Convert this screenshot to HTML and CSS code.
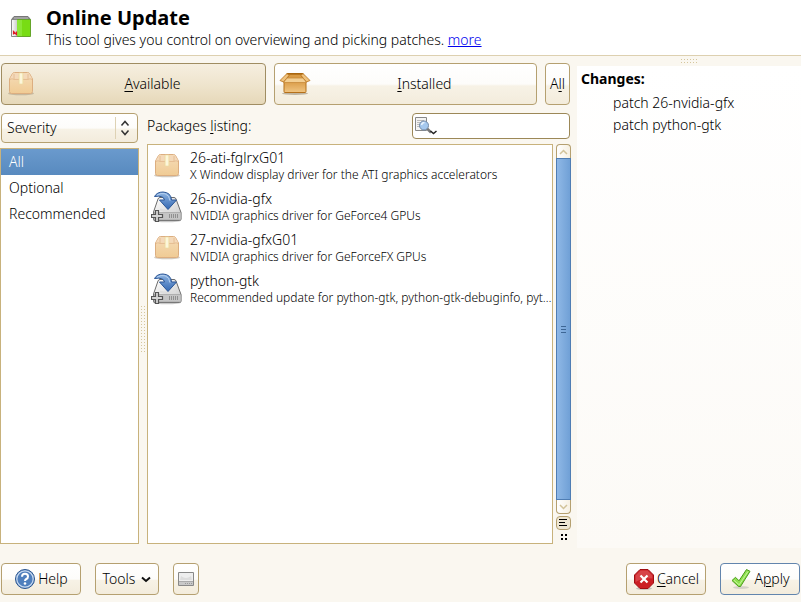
FILE: index.html
```html
<!DOCTYPE html>
<html lang="en">
<head>
<meta charset="utf-8">
<meta name="viewport" content="width=device-width, initial-scale=1">
<title>Online Update</title>
<link rel="stylesheet" href="styles.css">
</head>
<body>
<svg class="defs" aria-hidden="true">
  <defs>
    <linearGradient id="box-fill" x1="0" y1="0" x2="0" y2="1"><stop offset="0" stop-color="#f5dcb8"/><stop offset="1" stop-color="#f0cb94"/></linearGradient>
    <linearGradient id="arrow-fill" x1="0" y1="0" x2="0" y2="1"><stop offset="0" stop-color="#8fb5e2"/><stop offset="1" stop-color="#3468b2"/></linearGradient>
    <linearGradient id="disk-fill" x1="0" y1="0" x2="1" y2="1"><stop offset="0" stop-color="#ffffff"/><stop offset="1" stop-color="#c9c9c9"/></linearGradient>
    <linearGradient id="open-fill" x1="0" y1="0" x2="0" y2="1"><stop offset="0" stop-color="#d99a45"/><stop offset="1" stop-color="#f0c582"/></linearGradient>
    <linearGradient id="side-fill" x1="0" y1="0" x2="1" y2="0"><stop offset="0" stop-color="#ffffff"/><stop offset="1" stop-color="#c4c4c4"/></linearGradient>
    <symbol id="box" viewBox="0 0 28 28">
      <ellipse cx="14" cy="23.500" rx="13" ry="1.800" fill="#9a8a70" opacity=".45"/>
      <path d="M2.500 9 5.500 3.500q.6-1 2-1h13q1.400 0 2 1L25.500 9v12.500q0 2-2 2h-19q-2 0-2-2z" fill="url(#box-fill)" stroke="#dcae80"/>
      <path d="M3 8.500 6 3.500h16l3 5z" fill="#f4d9ba"/>
      <path d="M3 9.500Q5 8 7 9.500M21 9.500q2-1.500 4 0M7 9.500h14M7 4 7 9M21 4v5" fill="none" stroke="#e2b88e" stroke-width=".8"/>
      <path d="M12 3h4v11h-4z" fill="#f9efc5" stroke="#ead9a2" stroke-width=".6"/>
      <path d="M14 3.500v10" stroke="#fffdf0" stroke-width="1"/>
    </symbol>
    <symbol id="install" viewBox="0 0 32 32">
      <ellipse cx="16" cy="29.500" rx="14" ry="1.800" fill="#777" opacity=".4"/>
      <path d="M7 8q.5-1.500 2-1.500h14q1.500 0 2 1.500l5 13.500v6.500q0 1.500-1.500 1.500H4Q2.500 29.500 2.500 28v-7z" fill="url(#disk-fill)" stroke="#6c6c6c"/>
      <path d="M3 21.500h27V28q0 1-1 1H4q-1 0-1-1z" fill="#c5c5c5" stroke="#999" stroke-width=".6"/>
      <path d="M18.500 23v4M20.500 23v4M22.500 23v4M24.500 23v4M26.500 23v4" stroke="#909090"/>
      <path d="M9 18.500q8 3 16 0" fill="none" stroke="#ddd" stroke-width="2"/>
      <path d="M3.500 5.500Q6 1 12 1q8 .4 8.500 8h5L17 18.500 8.500 9h5Q12.500 4 3.500 5.500z" fill="url(#arrow-fill)" stroke="#2a5596"/>
      <path d="M6 4.200q4-2.500 8-1.500 4.500 1.500 5 7" fill="none" stroke="#b5d0f0" stroke-width="1"/>
      <path d="M4.500 19.500h3v4h4v3h-4v4h-3v-4h-4v-3h4z" fill="#d6d6d6" stroke="#555" stroke-width="1.200"/>
    </symbol>
  </defs>
</svg>

<header class="banner">
  <svg class="banner-icon" viewBox="0 0 22 24" aria-hidden="true">
    <path d="M1.500 4.500 4 1.500h14l2.500 3z" fill="#888" stroke="#777"/>
    <path d="M4 3h14" stroke="#bbb"/>
    <path d="M1.500 4.500h6.500v17H1.500z" fill="url(#side-fill)" stroke="#888"/>
    <path d="M7.500 4.500h13v17h-13z" fill="#78dc14" stroke="#65a52a"/>
    <path d="M7 5h5v16H7z" fill="#8ae636"/>
    <path d="M3.500 19.500v-3l3 3v-3" fill="none" stroke="#e01b24" stroke-width="1.200"/>
  </svg>
  <div>
    <h1>Online Update</h1>
    <p>This tool gives you control on overviewing and picking patches. <a href="#more">more</a></p>
  </div>
</header>

<main class="workspace">
  <section class="packages">
    <div class="filters">
      <button type="button" class="button filter wide active" aria-pressed="true"><svg class="filter-icon" aria-hidden="true"><use href="#box"/></svg><span><u>A</u>vailable</span></button>
      <button type="button" class="button filter wide" aria-pressed="false">
        <svg class="filter-icon open" viewBox="0 0 32 24" aria-hidden="true">
          <ellipse cx="16" cy="21.500" rx="13" ry="1.500" fill="#8a7a60" opacity=".5"/>
          <path d="M5 9h22v10.500q0 1-1 1H6q-1 0-1-1z" fill="url(#open-fill)" stroke="#b5701a"/>
          <path d="M8 1.500h16l3 6H5z" fill="#b97720" stroke="#a9660f"/>
          <path d="M10 3h12l1 3H9z" fill="#d99b45"/>
          <path d="M8 1.500 1 8.500l3.500 1.500L10 3.500zM24 1.500l7 7-3.500 1.500L22 3.500z" fill="#efc27d" stroke="#b5701a" stroke-width=".8"/>
          <path d="M8 6h16l3.500 4.500h-23z" fill="#f3cf93" stroke="#c68a3b" stroke-width=".8"/>
        </svg><span><u>I</u>nstalled</span></button>
      <button type="button" class="button filter" aria-pressed="false"><span>A<u>l</u>l</span></button>
    </div>

    <div class="columns">
      <aside class="groups">
        <div class="combo">
          <select aria-label="Group by"><option>Severity</option></select>
          <svg viewBox="0 0 22 22" aria-hidden="true"><path d="M.5 0v22" stroke="#ded2b4"/><path d="m6.500 8.500 3.500-4 3.500 4M6.500 13.500l3.500 4 3.500-4" fill="none" stroke="#333" stroke-width="1.500"/></svg>
        </div>
        <ul class="group-list">
          <li class="selected">All</li>
          <li>Optional</li>
          <li>Recommended</li>
        </ul>
      </aside>

      <div class="grip vertical"></div>

      <div class="listing">
        <div class="listing-head">
          <label for="search">Packages <u>l</u>isting:</label>
          <div class="search">
            <svg viewBox="0 0 24 20" aria-hidden="true">
              <path d="M.5 1.500h11v13H.5z" fill="#f4f4f4" stroke="#888"/>
              <path d="M2 4.500h7M2 6.500h4M2 8.500h3M2 10.500h3" stroke="#bbb"/>
              <path d="m12 12.500 4 4" stroke="#777" stroke-width="2.500"/>
              <circle cx="9" cy="9.500" r="4.500" fill="#a5c8ee" stroke="#7088a6"/>
              <path d="M6.500 9q.5-2.500 3-2.500" fill="none" stroke="#e9f4ff" stroke-width="1.500"/>
              <path d="m15.500 15 3 2.500 3-2.500" fill="none" stroke="#222" stroke-width="1.500"/>
            </svg>
            <input id="search" type="text">
          </div>
        </div>
        <div class="list-area">
          <ul class="package-list">
            <li><svg class="package-icon small" aria-hidden="true"><use href="#box"/></svg><div class="package-text"><h2>26-ati-fglrxG01</h2><p>X Window display driver for the ATI graphics accelerators</p></div></li>
            <li><svg class="package-icon" aria-hidden="true"><use href="#install"/></svg><div class="package-text"><h2>26-nvidia-gfx</h2><p>NVIDIA graphics driver for GeForce4 GPUs</p></div></li>
            <li><svg class="package-icon small" aria-hidden="true"><use href="#box"/></svg><div class="package-text"><h2>27-nvidia-gfxG01</h2><p>NVIDIA graphics driver for GeForceFX GPUs</p></div></li>
            <li><svg class="package-icon" aria-hidden="true"><use href="#install"/></svg><div class="package-text"><h2>python-gtk</h2><p>Recommended update for python-gtk, python-gtk-debuginfo, pyt…</p></div></li>
          </ul>
          <div class="scroll">
            <button type="button" class="step up" aria-label="Scroll up"><svg viewBox="0 0 9 6" aria-hidden="true"><path d="m1 5 3.500-3.500L8 5" fill="none" stroke="#d2c39a" stroke-width="1.500"/></svg></button>
            <div class="thumb"><i></i><i></i><i></i></div>
            <button type="button" class="step down" aria-label="Scroll down"><svg viewBox="0 0 9 6" aria-hidden="true"><path d="m1 1 3.500 3.500L8 1" fill="none" stroke="#d2c39a" stroke-width="1.500"/></svg></button>
            <button type="button" class="step menu" aria-label="List options"><svg viewBox="0 0 9 8" aria-hidden="true"><path d="M0 .5h8M0 3.500h6M0 6.500h8" stroke="#000"/></svg></button>
            <svg class="dots" viewBox="0 0 6 6" aria-hidden="true"><path d="M0 0h2v2H0zM4 0h2v2H4zM0 4h2v2H0zM4 4h2v2H4z"/></svg>
          </div>
        </div>
      </div>
    </div>
  </section>

  <aside class="side">
    <div class="grip horizontal"></div>
    <div class="changes">
      <h2>Changes:</h2>
      <ul>
        <li>patch 26-nvidia-gfx</li>
        <li>patch python-gtk</li>
      </ul>
    </div>
  </aside>
</main>

<footer class="actions">
  <button type="button" class="button help">
    <svg viewBox="0 0 22 22" aria-hidden="true"><circle cx="11" cy="11" r="9.500" fill="#4f7fbd" stroke="#2c568f"/><circle cx="11" cy="11" r="8.200" fill="none" stroke="#c9daf0" stroke-width="1.200"/><path d="M8 8.700q0-3 3-3t3 2.700q0 1.700-1.700 2.600-1.300.7-1.300 2" fill="none" stroke="#fff" stroke-width="2"/><circle cx="11" cy="15.500" r="1.300" fill="#fff"/></svg>Help</button>
  <button type="button" class="button tools">Tools<svg viewBox="0 0 10 7" aria-hidden="true"><path d="m1 1.500 4 3.500 4-3.500" fill="none" stroke="#111" stroke-width="2"/></svg></button>
  <button type="button" class="button disk" aria-label="Disk usage">
    <svg viewBox="0 0 16 14" aria-hidden="true"><path d="M.5.500h15v13H.5z" fill="#eee" stroke="#888"/><path d="M1 9.500h14" stroke="#aaa"/><path d="M1 10h14v3H1z" fill="#c8c8c8"/><path d="M3 4q5 4 10 0l1 4H2z" fill="#ddd"/><path d="M7 11.500h7" stroke="#999" stroke-dasharray="1 1"/></svg></button>
  <button type="button" class="button cancel">
    <svg viewBox="0 0 22 22" aria-hidden="true"><ellipse cx="11" cy="20.500" rx="8" ry="1.500" fill="#999" opacity=".5"/><path d="M7 1.500h8L20.500 7v8L15 20.500H7L1.500 15V7z" fill="#cc1f24" stroke="#a00d12"/><path d="M7.500 2.600h7l4.900 4.900v3Q10 9 2.600 14V7.500z" fill="#e2686b" opacity=".5"/><path d="m7.500 7.500 7 7M14.500 7.500l-7 7" stroke="#fff" stroke-width="2.200"/></svg><span><u>C</u>ancel</span></button>
  <button type="button" class="button apply">
    <svg viewBox="0 0 22 22" aria-hidden="true"><ellipse cx="11" cy="19.500" rx="8" ry="1.500" fill="#999" opacity=".35"/><path d="m2 12.500 3.500-3.200 3.500 3.500L16.500 1.500l3.500 1.800L10.500 18.500H8.500z" fill="#8ee04e" stroke="#4a9b1c" stroke-linejoin="round"/><path d="m4 12.300 5.200 4.500L18 3.500" fill="none" stroke="#c4f59c"/></svg><span>A<u>p</u>ply</span></button>
</footer>
</body>
</html>
```
FILE: styles.css
```css
* { box-sizing: border-box; }

body {
  margin: 0;
  min-height: 100vh;
  display: flex;
  flex-direction: column;
  background: #faf7f0;
  color: #000;
  font: 300 14px/20px "Noto Sans", "Open Sans", sans-serif;
}

h1, h2, p, ul { margin: 0; padding: 0; }
ul { list-style: none; }
svg { display: block; flex: none; }
.defs { position: absolute; width: 0; height: 0; }

u {
  text-decoration-thickness: 1px;
  text-underline-offset: 2px;
}

.banner {
  display: flex;
  gap: 14px;
  height: 56px;
  padding: 6px 10px 0;
  background: #fff;
  border-bottom: 1px solid #ddd0b0;
}
.banner-icon { width: 22px; height: 24px; margin-top: 9px; }
.banner h1 { font-size: 20px; font-weight: 700; line-height: 24px; }
.banner a { color: #0000ee; }

.button {
  display: flex;
  align-items: center;
  justify-content: center;
  border: 1px solid #b5a070;
  border-radius: 4px;
  background: linear-gradient(#fff, #fdfcfa 50%, #f7f2e6 55%, #f3ecdc);
  color: #000;
  font: inherit;
}

.workspace { flex: 1; display: flex; gap: 6px; }
.packages {
  flex: 1;
  min-width: 0;
  display: flex;
  flex-direction: column;
  padding-top: 7px;
}

.filters { display: flex; gap: 8px; padding: 0 1px; }
.filter { height: 42px; padding: 0 4px; }
.filter.wide { flex: 1 1 auto; }
.filter.wide span { flex: 1; padding-left: 6px; }
.filter.active {
  border-color: #a08d62;
  background: linear-gradient(#f6efe0, #efe5ce 50%, #e6d8b9);
}
.filter-icon { width: 28px; height: 28px; margin: 0 3px 0 1px; }
.filter-icon.open { width: 32px; height: 24px; margin: 0; }

.columns { flex: 1; display: flex; padding-top: 8px; }
.groups {
  width: 139px;
  display: flex;
  flex-direction: column;
  gap: 5px;
}
.combo { position: relative; margin: 0 1px; }
.combo select {
  display: block;
  width: 100%;
  height: 30px;
  padding: 0 5px;
  appearance: none;
  border: 1px solid #b5a070;
  border-radius: 4px;
  background: linear-gradient(#fff, #fdfcfa 50%, #f7f2e6 55%, #f3ecdc);
  color: #000;
  font: inherit;
}
.combo svg {
  position: absolute;
  top: 4px;
  right: 1px;
  width: 22px;
  height: 22px;
  pointer-events: none;
}
.group-list {
  flex: 1;
  background: #fff;
  border: 1px solid #c8b27c;
}
.group-list li { height: 26px; padding: 0 8px; line-height: 26px; }
.group-list .selected {
  background: linear-gradient(#6a9acd, #588abf);
  color: #fff;
}

.grip {
  background:
    repeating-linear-gradient(90deg, transparent 0 1px, #faf7f0 1px 3px),
    repeating-linear-gradient(#d5c69d 0 1px, #faf7f0 1px 3px);
}
.grip.vertical { align-self: center; width: 4px; height: 46px; margin: 0 2px; }
.grip.horizontal { width: 16px; height: 4px; margin: 3px auto; }

.listing { flex: 1; min-width: 0; display: flex; flex-direction: column; gap: 5px; }
.listing-head {
  display: flex;
  align-items: center;
  justify-content: space-between;
  padding-right: 1px;
}
.search {
  display: flex;
  align-items: center;
  width: 158px;
  height: 26px;
  padding: 0 2px;
  border: 1px solid #9c8858;
  border-radius: 4px;
  background: #fff;
}
.search svg { width: 24px; height: 20px; }
.search input {
  flex: 1;
  min-width: 0;
  border: 0;
  outline: 0;
  background: none;
  font: inherit;
}

.list-area { flex: 1; display: flex; gap: 3px; }
.package-list {
  flex: 1;
  min-width: 0;
  overflow: hidden;
  background: #fff;
  border: 1px solid #c8b27c;
}
.package-list li {
  display: flex;
  align-items: center;
  gap: 7px;
  height: 41px;
  padding-left: 3px;
}
.package-icon { width: 32px; height: 32px; }
.package-icon.small { padding: 2px; }
.package-text { flex: 1; min-width: 0; }
.package-text h2 { font-size: 14px; font-weight: 300; line-height: 18px; }
.package-text p {
  font-size: 12px;
  line-height: 16px;
  white-space: nowrap;
}

.scroll { width: 15px; display: flex; flex-direction: column; align-items: center; }
.step {
  display: flex;
  align-items: center;
  justify-content: center;
  width: 15px;
  height: 14px;
  padding: 0;
  border: 1px solid #b5a070;
  background: linear-gradient(90deg, #fff, #f6f0e2);
}
.step svg { width: 9px; height: 6px; }
.step.up { border-bottom: 0; border-radius: 4px 4px 0 0; }
.step.down { border-top: 0; border-radius: 0 0 4px 4px; }
.step.menu { margin: 2px 0 4px; border-radius: 4px; background: #efe7d3; }
.step.menu svg { height: 8px; }
.thumb {
  flex: 1;
  display: flex;
  flex-direction: column;
  align-items: center;
  justify-content: center;
  gap: 2px;
  width: 15px;
  border: 1px solid #4f7db3;
  background: linear-gradient(90deg, #8fb8e6, #70a0d6);
}
.thumb i { width: 5px; height: 1px; background: #3d6695; }
.dots { width: 6px; height: 6px; margin-bottom: 4px; }

.side { width: 224px; display: flex; flex-direction: column; margin-bottom: -4px; }
.changes {
  flex: 1;
  padding: 3px 4px;
  background: linear-gradient(#fff, #fcfaf6);
}
.changes h2 { font-size: 14px; font-weight: 700; line-height: 20px; }
.changes ul { padding: 3px 0 0 32px; }
.changes li { line-height: 22px; }

.actions {
  display: flex;
  padding: 19px 1px 7px;
}
.actions .button { height: 32px; padding: 0; }
.help { width: 80px; margin-right: 14px; gap: 2px; }
.help svg, .cancel svg, .apply svg { width: 22px; height: 22px; }
.tools { width: 64px; margin-right: 14px; gap: 6px; }
.tools svg { width: 10px; height: 7px; }
.disk { width: 26px; }
.disk svg { width: 16px; height: 14px; }
.cancel { width: 80px; margin-left: auto; gap: 2px; }
.actions .apply { width: 80px; margin-left: 14px; gap: 2px; border-color: #6285ad; }
```
